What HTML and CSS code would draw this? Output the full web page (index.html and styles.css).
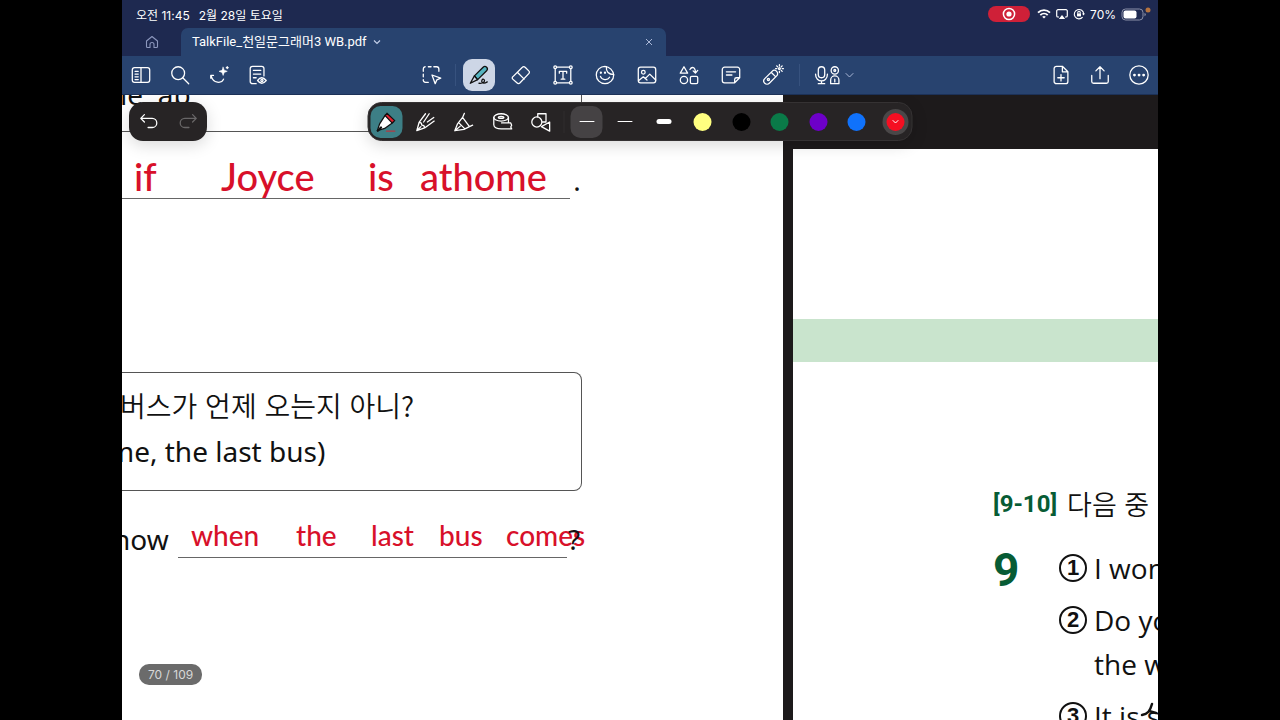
FILE: index.html
```html
<!DOCTYPE html>
<html lang="ko">

<head>
    <meta charset="UTF-8">
    <meta name="viewport" content="width=device-width, initial-scale=1.0">
    <title>TalkFile_천일문그래머3 WB.pdf</title>

    <link rel="stylesheet" href="styles.css">
</head>

<body>

    <div class="tablet">

        <header>
            <div class="status-bar">
                <span>오전 11:45</span>
                <span>2월 28일 토요일</span>
                <div class="status-right">
                    <span class="recording">
                        <svg width="14" height="14" viewBox="0 0 14 14"><circle cx="7" cy="7" r="5.6" fill="none" stroke="#fff" stroke-width="1.5"/><circle cx="7" cy="7" r="2.6" fill="#fff"/></svg>
                    </span>
                    <svg width="14" height="12" viewBox="0 0 14 12" fill="none" stroke="#fff" stroke-width="1.9"><path d="M1 4.6a8.6 8.6 0 0 1 12 0M3.3 7.1a5.3 5.3 0 0 1 7.4 0"/><path d="M7 10.6 5.2 8.8a2.6 2.6 0 0 1 3.6 0z" fill="#fff" stroke="none"/></svg>
                    <svg width="12" height="12" viewBox="0 0 12 12"><path d="M3 9H2A1.3 1.3 0 0 1 .7 7.7V3A1.3 1.3 0 0 1 2 1.7h8A1.3 1.3 0 0 1 11.3 3v4.7A1.3 1.3 0 0 1 10 9H9" fill="none" stroke="#fff" stroke-width="1.2"/><path d="M6 7l3.2 4H2.8z" fill="#fff"/></svg>
                    <svg width="12" height="12" viewBox="0 0 12 12" fill="none" stroke="#fff" stroke-width="1.1"><path d="M9.6 9.2A4.7 4.7 0 1 1 10.7 6"/><path d="M9 5.5h3l-1.5 2z" fill="#fff" stroke="none"/><rect x="4" y="5.4" width="4" height="3" fill="#fff" stroke="none"/><path d="M4.800 5.500V4.400a1.200 1.200 0 0 1 2.400 0v1.100"/></svg>
                    <span class="percent">70%</span>
                    <svg width="30" height="14" viewBox="0 0 30 14"><rect x="1" y="2" width="21" height="11" rx="3.5" fill="none" stroke="#8b91a8"/><rect x="2.500" y="3.500" width="13" height="8" rx="2" fill="#fff"/><path d="M23.500 6v3.200q1.300-.4 1.300-1.600T23.500 6" fill="#8b91a8"/><circle cx="27" cy="3" r="2.500" fill="#b5733f"/></svg>
                </div>
            </div>

            <div class="tabs">
                <button class="home" aria-label="Home">
                    <svg width="14" height="14" viewBox="0 0 14 14" fill="none" stroke="#8c97bd" stroke-width="1.1" stroke-linejoin="round"><path d="M1.500 6 7 1.500 12.500 6v5.500a1 1 0 0 1-1 1H9V9.500a2 2 0 0 0-4 0v3H2.500a1 1 0 0 1-1-1z"/></svg>
                </button>
                <div class="tab">
                    <button class="tab-name">TalkFile_천일문그래머3 WB.pdf
                        <svg width="8" height="6" viewBox="0 0 8 6" fill="none" stroke="#c3cfe8" stroke-width="1.2"><path d="M1 1.500l3 3 3-3"/></svg>
                    </button>
                    <button class="close" aria-label="Close tab">
                        <svg width="8" height="8" viewBox="0 0 8 8" stroke="#a9b7d6"><path d="M1 1l6 6M7 1L1 7"/></svg>
                    </button>
                </div>
            </div>

            <nav class="toolbar">
                <div class="group">
                    <button aria-label="Sidebar"><svg viewBox="0 0 24 24"><rect x="2.500" y="4" width="19" height="16" rx="2.500"/><path d="M12 4v16M5.500 8h3.500M5.500 11h3.500M5.500 14h3.500M5.500 17h3.500"/></svg></button>
                    <button aria-label="Search"><svg viewBox="0 0 24 24"><circle cx="10" cy="10" r="7"/><path d="M15 15l6.500 6.500"/></svg></button>
                    <button aria-label="AI lasso"><svg viewBox="0 0 24 24"><path d="M3 15.500v-3h3M3.500 13c2 8.500 11.500 8.500 13.500 3.500"/><path d="M16.500 3.500l1.200 3.300L21 8l-3.300 1.200-1.200 3.300-1.200-3.300L12 8l3.300-1.200z" fill="#fff" stroke-width=".6"/><path d="M21 3v2M20 4h2"/></svg></button>
                    <button aria-label="Read mode"><svg viewBox="0 0 24 24"><path d="M10 21.500H6A2.500 2.500 0 0 1 3.500 19V5A2.500 2.500 0 0 1 6 2.500h10A2.500 2.500 0 0 1 18.500 5v8M7 7h8M7 11h8M7 15h3"/><path d="M11.500 18q4.500-6 9.500 0-5 6-9.500 0z"/><circle cx="16.300" cy="18" r="1.200"/></svg></button>
                </div>
                <div class="group middle">
                    <button aria-label="Lasso"><svg viewBox="0 0 24 24"><path d="M2.500 8V5.500a2.500 2.500 0 0 1 2-2.500M8 3h3M14 3h3a2.500 2.500 0 0 1 2.500 2.500V8M2.500 11v3M2.500 17a2.500 2.500 0 0 0 2.500 3h3"/><path d="M12 12l9.500 3.500-4.200 1.800L15.500 21.500z"/></svg></button>
                    <span class="sep"></span>
                    <button class="selected" aria-label="Pen"><svg viewBox="0 0 24 24"><path d="M7 13 16.500 3.500a2.600 2.600 0 0 1 3.800 3.800L10.500 17z" fill="#55b4c0"/><path d="M7 13l-4.500 8L10.500 17zM2.500 21l3-1.500"/><path d="M12 21c5 .5 7-2.500 5.500-4s-3.500 1-2 3 4 .5 5.500-.5"/></svg></button>
                    <button aria-label="Eraser"><svg viewBox="0 0 24 24"><path d="M3 14 13.500 3.500a2 2 0 0 1 3 0l4 4a2 2 0 0 1 0 3L11 20.500a2.500 2.500 0 0 1-3.500 0L3 16.500a1.700 1.700 0 0 1 0-2.500zM8 9l7.500 7.500"/></svg></button>
                    <button aria-label="Text"><svg viewBox="0 0 24 24"><path d="M5 3.500h14M5 20.500h14M3.500 5v14M20.500 5v14"/><circle cx="3.500" cy="3.500" r="1.500"/><circle cx="20.500" cy="3.500" r="1.500"/><circle cx="3.500" cy="20.500" r="1.500"/><circle cx="20.500" cy="20.500" r="1.500"/><path d="M8 10V8h8v2M12 8v8.500M10 16.500h4"/></svg></button>
                    <button aria-label="Sticker"><svg viewBox="0 0 24 24"><path d="M12 2.500A9.500 9.500 0 1 0 21.500 12C21 7 17 3 12 2.500z"/><path d="M13.500 3c-.5 5.500 2.500 8.500 8 8.500"/><path d="M7 13.500c1.500 4.500 8 4.500 10 1"/><path d="M7.500 9.500v.1M12 9.500v.1" stroke-width="2.500"/></svg></button>
                    <button aria-label="Image"><svg viewBox="0 0 24 24"><rect x="2.500" y="3.500" width="19" height="17" rx="2.500"/><circle cx="8" cy="9" r="2"/><path d="M3 18l5-4 4 3.500M10 16l5-5 6.500 6.500"/></svg></button>
                    <button aria-label="Elements"><svg viewBox="0 0 24 24"><path d="M6.500 3 10.500 10h-8z"/><circle cx="6.500" cy="17.500" r="4"/><rect x="13.500" y="13.500" width="8" height="8" rx="1.500"/><path d="M13 6c2-3.500 6-3 6 3.500M16.500 7.500l2.500 2.500 2.500-3"/></svg></button>
                    <button aria-label="Sticky note"><svg viewBox="0 0 24 24"><path d="M5 3.500h14A2.500 2.500 0 0 1 21.500 6v9L16 20.500H5A2.500 2.500 0 0 1 2.500 18V6A2.500 2.500 0 0 1 5 3.500zM16 20.500V17a2 2 0 0 1 2-2h3.500M7 8.500h10M7 12h6"/></svg></button>
                    <button aria-label="Laser pointer"><svg viewBox="0 0 24 24"><path d="M3 16l8-8a3.300 3.300 0 0 1 5 5l-8 8a3.500 3.500 0 0 1-5-5z"/><path d="M10.500 9.500l4 4"/><circle cx="7" cy="17" r="1.200"/><circle cx="19" cy="5" r="1"/><path d="M19 .8v1.400M19 8v1.400M14.800 5h1.400M22 5h1.400M16 2l1 1M21 7l1 1M22 2l-1 1"/></svg></button>
                    <span class="sep"></span>
                    <button class="record" aria-label="Record"><svg class="wide" viewBox="0 0 30 24"><rect x="5.500" y="3" width="7" height="12" rx="3.500"/><path d="M2.500 11c0 10 13 10 13 0M9 18.500V21M5.500 21.500h7"/><circle cx="23.500" cy="7" r="4"/><circle cx="23.500" cy="7" r="1"/><path d="M19 21.500v-4a4.500 4.500 0 0 1 9 0v4zM23.500 16.500v3"/></svg><svg class="chevron" viewBox="0 0 8 6"><path d="M.5 1.500L4 5l3.500-3.500"/></svg></button>
                </div>
                <div class="group right">
                    <button aria-label="Add page"><svg viewBox="0 0 24 24"><path d="M13.500 2.500H7A2.500 2.500 0 0 0 4.500 5v14A2.500 2.500 0 0 0 7 21.500h10a2.500 2.500 0 0 0 2.500-2.500V8.500zM13.500 2.500v6h6M12 11.500v7M8.500 15h7"/></svg></button>
                    <button aria-label="Share"><svg viewBox="0 0 24 24"><path d="M3 12.500V19a2 2 0 0 0 2 2h14a2 2 0 0 0 2-2v-6.500M12 16V3M7.500 7.500 12 3l4.500 4.500"/></svg></button>
                    <button aria-label="More"><svg viewBox="0 0 24 24"><circle cx="12" cy="12" r="10"/><path d="M7 12h.1M12 12h.1M17 12h.1" stroke-width="3"/></svg></button>
                </div>
            </nav>
        </header>

        <main>
            <!-- left page -->
            <section class="page">
                <div class="question first">
                    <p class="cut-ab">me, ab</p>
                </div>
                <div class="answer">
                    <span class="blank row-one">
                        <span>if</span>
                        <span>Joyce</span>
                        <span>is</span>
                        <span>athome</span>
                    </span>
                    <span class="mark">.</span>
                </div>
                <div class="question second">
                    <p class="korean">버스가 언제 오는지 아니?</p>
                    <p class="cut-me">me, the last bus)</p>
                </div>
                <div class="answer">
                    <span class="know">know</span>
                    <span class="blank row-two">
                        <span>when</span>
                        <span>the</span>
                        <span>last</span>
                        <span>bus</span>
                        <span>comes</span>
                    </span>
                    <span class="mark">?</span>
                </div>
            </section>

            <!-- right page -->
            <section class="page next">
                <div class="band"></div>
                <h2><span class="range">[9-10]</span> 다음 중</h2>
                <div class="problem">
                    <span class="number">9</span>
                    <ul>
                        <li><span class="circled">1</span><span>I wonder</span></li>
                        <li><span class="circled">2</span><span>Do you<br>the way</span></li>
                        <li><span class="circled">3</span><span>It is s</span></li>
                    </ul>
                </div>
            </section>

            <svg class="pen-mark" width="18" height="18" viewBox="0 0 18 18" fill="none" stroke="#111" stroke-width="2.5" stroke-linecap="round"><path d="M2 13c6-1 8-4 10-11M9 9l7 2"/></svg>

            <div class="undo-bar">
                <button aria-label="Undo"><svg viewBox="0 0 24 24"><path d="M7 4 3 8l4 4M3 8h12.500a5 5 0 0 1 0 10H11"/></svg></button>
                <button aria-label="Redo" disabled><svg viewBox="0 0 24 24"><path d="M17 4l4 4-4 4M21 8H8.500a5 5 0 0 0 0 10H13"/></svg></button>
            </div>

            <div class="pen-bar">
                <button class="teal" aria-label="Fountain pen"><svg viewBox="0 0 24 24"><path d="M11 4 4.500 14 2 21.500 10 19l9-6.500z" fill="#fff" stroke="#111"/><path d="M12.500 2.500 21 10.500l-3 2.500-7.500-8z" fill="#e3202f" stroke="#111"/><path d="M2.500 21.500 6 18" stroke="#111" stroke-width="2.500"/><path d="M12 22h9" stroke="#b23a43"/></svg></button>
                <button aria-label="Ball pen"><svg viewBox="0 0 24 24"><path d="M12 3 5 12.500 2.500 21.500l8.500-3L21.500 11M5 12.500q3 0 3 3 3 0 3 3M16 3l-6 9M21 7l-7 5M3 21l4-4"/></svg></button>
                <button aria-label="Brush pen"><svg viewBox="0 0 24 24"><path d="M13 2.500l-2 4.500 7.500 10 3.500-1.500M11 7 5.500 14l-3 7.500 10-1.500 6-3M2.500 21.500l6-5M7 13l6.500 6.500"/></svg></button>
                <button aria-label="Tape"><svg viewBox="0 0 24 24"><ellipse cx="10.500" cy="7" rx="8" ry="4"/><ellipse cx="10.500" cy="7" rx="3" ry="1"/><path d="M2.500 7v8c0 3 4 4.500 8 4.500h11.500l-1-2 1-2-1-2.500H11M18.500 7v6"/></svg></button>
                <button aria-label="Shape pen"><svg viewBox="0 0 24 24"><path d="M9 6.500V3h9v9h-4"/><circle cx="8" cy="12" r="5.500"/><path d="M22 12v10l-9-5z"/></svg></button>
                <span class="sep"></span>
                <button class="gray" aria-label="Thin"><span class="stroke thin"></span></button>
                <button aria-label="Medium"><span class="stroke thin"></span></button>
                <button aria-label="Thick"><span class="stroke thick"></span></button>
                <button aria-label="Yellow"><span class="color yellow"></span></button>
                <button aria-label="Black"><span class="color black"></span></button>
                <button aria-label="Green"><span class="color green"></span></button>
                <button aria-label="Purple"><span class="color purple"></span></button>
                <button aria-label="Blue"><span class="color blue"></span></button>
                <button aria-label="Red"><span class="color red"><svg class="tiny" viewBox="0 0 8 6"><path d="M1.500 1.500L4 4l2.500-2.500"/></svg></span></button>
            </div>

            <div class="page-count">70 / 109</div>
        </main>

    </div>

</body>

</html>
```
FILE: styles.css
```css
* {
    box-sizing: border-box;
}

body {
    margin: 0;
    background: #000;
    color: #111;
    font-family: "Noto Sans", "Noto Sans CJK KR", sans-serif;
    overflow: hidden;
}

p, h2, ul {
    margin: 0;
    padding: 0;
}

button {
    display: flex;
    align-items: center;
    justify-content: center;
    padding: 0;
    border: 0;
    background: none;
    color: inherit;
    font: inherit;
}

svg {
    flex: none;
}

.tablet {
    display: flex;
    flex-direction: column;
    height: 100vh;
    margin: 0 122px;
}

/* Header */
header {
    background: #1e2950;
    color: #fff;
    font-family: "Inter", "Noto Sans CJK KR", sans-serif;
    font-size: 12px;
}

.status-bar {
    display: flex;
    align-items: center;
    gap: 9px;
    height: 28px;
    padding: 0 7px 0 14px;
}

.status-right {
    display: flex;
    align-items: center;
    gap: 5px;
    margin-left: auto;
}

.recording {
    display: flex;
    align-items: center;
    justify-content: center;
    width: 42px;
    height: 16px;
    margin-right: 2px;
    border-radius: 8px;
    background: #cf2038;
}

.tabs {
    display: flex;
    height: 28px;
}

.home {
    width: 59px;
}

.tab {
    display: flex;
    align-items: center;
    justify-content: space-between;
    width: 485px;
    padding: 0 13px 0 11px;
    border-radius: 7px 7px 0 0;
    background: #28436f;
}

.tab-name {
    gap: 6px;
    font-family: "Roboto", "Noto Sans CJK KR", sans-serif;
    font-size: 13px;
    line-height: 16px;
}

.toolbar {
    display: grid;
    grid-template-columns: 1fr auto 1fr;
    align-items: center;
    height: 39px;
    padding: 0 4px 0 3px;
    border-bottom: 1px solid #1c3157;
    background: #28436f;
}

.group {
    display: flex;
    align-items: center;
    gap: 8px;
}

.group button {
    width: 31px;
    height: 32px;
}

.toolbar svg,
.undo-bar svg,
.pen-bar svg {
    width: 22px;
    height: 22px;
    fill: none;
    stroke: #fff;
    stroke-width: 1.4;
    stroke-linecap: round;
    stroke-linejoin: round;
}

.middle {
    gap: 10px;
    padding-right: 7px;
}

.middle button {
    width: 32px;
}

.right {
    justify-content: flex-end;
}

.sep {
    width: 1px;
    height: 22px;
    background: #37527e;
}

.middle .sep:nth-child(2) {
    margin: 0 -3px;
}

.group .selected {
    border-radius: 9px;
    background: #cdd6e6;
}

.toolbar .selected svg {
    stroke: #111;
}

.group .record {
    gap: 4px;
    width: 46px;
}

.toolbar .wide {
    width: 28px;
}

.toolbar .chevron {
    width: 9px;
    height: 6px;
    stroke: #a9b7d6;
    stroke-width: 1;
}

/* Document */
main {
    position: relative;
    display: flex;
    flex: 1;
    gap: 10px;
    min-height: 0;
    overflow: hidden;
    background: #1d1a1b;
}

.page {
    flex: 661;
    min-width: 0;
    overflow: hidden;
    background: #fff;
    font-size: 28px;
    white-space: nowrap;
}

.question {
    width: 460px;
    height: 119px;
    padding-top: 9px;
    border: 1px solid #555;
    border-left: 0;
    border-radius: 0 8px 8px 0;
    line-height: 46px;
}

.first {
    margin-top: -82px;
    padding-top: 57px;
}

.second {
    margin-top: 173px;
}

.korean {
    font-family: "Noto Sans CJK KR", sans-serif;
    font-weight: 350;
    text-indent: -2px;
}

.cut-me {
    text-indent: -14px;
}

.cut-ab {
    text-indent: -21px;
}

.answer {
    display: flex;
    align-items: flex-end;
    height: 67px;
    line-height: 38px;
}

.know {
    width: 56px;
    text-indent: -24px;
}

.blank {
    display: grid;
    align-items: end;
    height: 67px;
    border-bottom: 1px solid #666;
    color: #d8102a;
    font-family: "Lato", sans-serif;
    font-weight: 500;
}

.row-one {
    grid-template-columns: 87px 147px 52px auto;
    width: 448px;
    padding-left: 12px;
    font-size: 38px;
    line-height: 44px;
}

.row-two {
    grid-template-columns: 105px 75px 68px 67px auto;
    width: 389px;
    padding: 0 0 3px 13px;
    font-size: 28px;
}

.mark {
    width: 14px;
    text-align: center;
}

.next {
    flex: 365;
    margin-top: 54px;
}

.band {
    height: 43px;
    margin-top: 170px;
    background: #c9e4cd;
}

.next h2 {
    display: flex;
    align-items: center;
    gap: 10px;
    margin: 122px 0 0 200px;
    font-family: "Noto Sans CJK KR", sans-serif;
    font-size: 27px;
    font-weight: 350;
    line-height: 40px;
}

.range,
.number {
    color: #075c35;
    font-family: "Roboto", sans-serif;
    font-weight: 700;
}

.range {
    font-size: 24px;
}

.problem {
    display: flex;
    margin: 22px 0 0 200px;
    font-family: "Open Sans", sans-serif;
}

.number {
    flex: none;
    width: 66px;
    font-size: 46px;
    line-height: 48px;
}

.problem ul {
    display: flex;
    flex-direction: column;
    gap: 8px;
    list-style: none;
    line-height: 44px;
}

.problem li {
    display: flex;
    gap: 7px;
}

.circled {
    flex: none;
    width: 28px;
    height: 28px;
    margin-top: 8px;
    border: 2px solid #111;
    border-radius: 50%;
    font: 700 22px/24px "Liberation Sans", sans-serif;
    text-align: center;
}

/* Floating over the document */
.pen-mark {
    position: absolute;
    right: 0;
    bottom: 0;
}

.undo-bar,
.pen-bar {
    position: absolute;
    top: 7px;
    display: flex;
    align-items: center;
    height: 39px;
    border-radius: 14px;
    background: #272425;
    box-shadow: 0 4px 16px rgba(0, 0, 0, 0.15);
}

.undo-bar {
    left: 7px;
    justify-content: space-around;
    width: 78px;
}

.undo-bar button:disabled {
    opacity: 0.3;
}

.pen-bar {
    left: 50%;
    justify-content: space-between;
    width: 545px;
    padding: 0 0 0 2px;
    border: 1px solid #353233;
    transform: translateX(-50%);
}

.pen-bar button {
    width: 32px;
    height: 32px;
    border-radius: 10px;
}

.pen-bar .sep {
    background: #302d2e;
}

.pen-bar .teal {
    background: #3d7f86;
}

.pen-bar .gray {
    background: #454244;
}

.stroke {
    width: 15px;
    border-radius: 3px;
    background: #fff;
}

.thin {
    height: 1px;
}

.thick {
    height: 5px;
}

.color {
    display: flex;
    align-items: center;
    justify-content: center;
    width: 18px;
    height: 18px;
    border-radius: 50%;
}

.yellow {
    background: #ffff80;
}

.black {
    background: #000;
}

.green {
    background: #0a7a48;
}

.purple {
    background: #6d00c8;
}

.blue {
    background: #1072fb;
}

.red {
    background: #f50f22;
    box-shadow: 0 0 0 4px #4a4748;
}

.pen-bar .tiny {
    width: 8px;
    height: 6px;
    stroke-width: 1;
}

.page-count {
    position: absolute;
    bottom: 35px;
    left: 17px;
    padding: 0 9px;
    border-radius: 10px;
    background: #6b6b6b;
    color: #d8d8d8;
    font-family: "Inter", sans-serif;
    font-size: 12px;
    line-height: 21px;
}
```
